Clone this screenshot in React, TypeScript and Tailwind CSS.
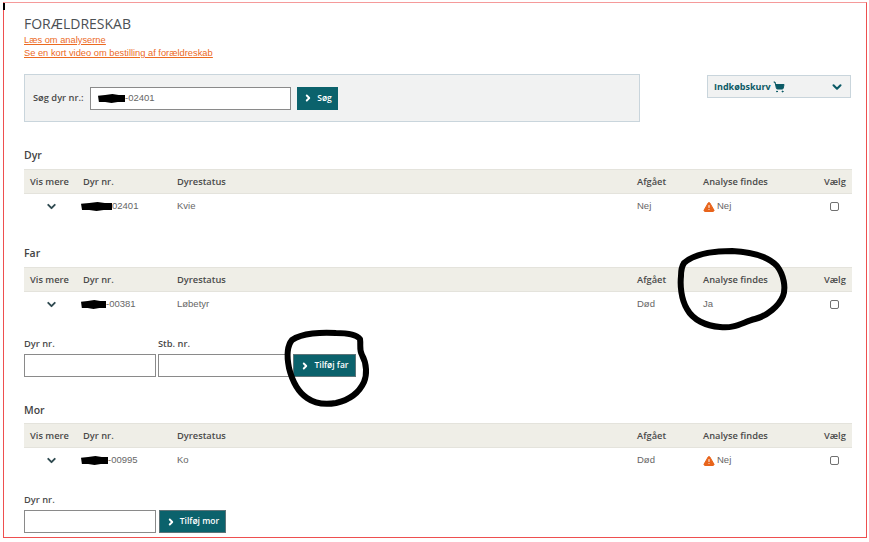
import { ShoppingCart, ChevronDown, ChevronRight, TriangleAlert } from 'lucide-react';

const sans = "font-['Open_Sans',sans-serif]";
const arial = "font-['Liberation_Sans',Arial,sans-serif]";

// black marker over the animal number
function Blob({ w, h = 9 }: { w: number; h?: number }) {
  return (
    <svg width={w} height={h} viewBox="0 0 30 10" preserveAspectRatio="none" className="shrink-0" aria-hidden="true">
      <path d="M0 2 8 1 16 0 23 1 30 1 30 9 22 9 15 10 8 9 1 9z" fill="#000" />
    </svg>
  );
}

function AddButton({ label, width }: { label: string; width: string }) {
  return (
    <button className={`flex items-center justify-center gap-1 h-[23px] ${width} bg-[#0b626c] border border-[#5d7478] text-white text-[8.5px] font-semibold ${sans}`}>
      <ChevronRight size={10} strokeWidth={4.5} />
      {label}
    </button>
  );
}

function AnimalTable({ dyrNr, status, afgaaet, analyse, blob }: { dyrNr: string; status: string; afgaaet: string; analyse: string; blob: number }) {
  return (
    <div className="w-[828px]">
      <div className={`flex items-center h-[25px] bg-[#efeee7] border-t border-b border-[#e4e3dc] text-[9.3px] font-semibold text-[#4a4a4a] ${sans}`}>
        <div className="w-[59px] pl-[6px]">Vis mere</div>
        <div className="w-[94px]">Dyr nr.</div>
        <div className="w-[460px]">Dyrestatus</div>
        <div className="w-[66px]">Afgået</div>
        <div className="w-[121px]">Analyse findes</div>
        <div>Vælg</div>
      </div>
      <div className={`flex items-center h-[25px] text-[9.5px] text-[#666] ${arial}`}>
        <div className="w-[54px] mr-[5px] flex justify-center text-[#2f4a50]">
          <ChevronDown size={13} strokeWidth={3.5} />
        </div>
        <div className="w-[94px] flex items-center -translate-x-[2px]">
          <Blob w={blob} />
          {dyrNr}
        </div>
        <div className="w-[460px]">{status}</div>
        <div className="w-[66px]">{afgaaet}</div>
        <div className="w-[121px] flex items-center gap-[2px]">
          {analyse === 'Nej' && <TriangleAlert size={12} strokeWidth={2} className="fill-[#e8641b] text-[#e8641b] [&>path:nth-child(2)]:text-white [&>path:nth-child(3)]:text-white" />}
          {analyse}
        </div>
        <div className="pl-[6px] flex">
          <span className="block w-[9px] h-[9px] bg-white border border-[#707070] rounded-[2px]" />
        </div>
      </div>
    </div>
  );
}

function Field({ label, width }: { label: string; width: string }) {
  return (
    <div className={`flex flex-col ${width}`}>
      <label className={`text-[9.3px] font-semibold text-[#4a4a4a] mb-[4px] leading-[13px] ${sans}`}>{label}</label>
      <input className="h-[23px] w-full bg-white border border-[#8a8a8a] outline-none" />
    </div>
  );
}

function Title({ children }: { children: string }) {
  return <h2 className={`text-[10.5px] font-semibold text-[#444] leading-[14px] ${sans}`}>{children}</h2>;
}

export default function App() {
  return (
    <div className="relative w-[869px] h-[542px] bg-white overflow-hidden">
      <div className="absolute left-[3px] top-[3px] w-[2px] h-[7px] bg-black" />
      <div className="ml-[3px] mt-[2px] w-[864px] h-[536px] border border-[#ee4f4f] border-t-[#f59a9a] pl-[20px] pt-[12px]">
        <div className="flex justify-between w-[828px]">
          <div>
            <h1 className={`text-[14px] leading-[18px] text-[#4b5054] ${sans}`}>FORÆLDRESKAB</h1>
            <div className={`text-[9.3px] leading-[13px] text-[#ec6a1f] underline ${arial} mt-[1px]`}>
              <a className="block" href="#">Læs om analyserne</a>
              <a className="block" href="#">Se en kort video om bestilling af forældreskab</a>
            </div>
            <div className="flex items-center w-[616px] h-[48px] mt-[14px] bg-[#f1f2f2] border border-[#c9d5dc] pl-[8px] gap-[6px]">
              <span className={`text-[9.3px] font-semibold text-[#4a4a4a] ${sans} w-[51px] whitespace-nowrap`}>Søg dyr nr.:</span>
              <div className={`flex items-center w-[201px] h-[23px] bg-white border border-[#8a8a8a] pl-[7px] text-[9.5px] text-[#666] ${arial}`}>
                <Blob w={27} />-02401
              </div>
              <button className={`flex items-center justify-center gap-1 w-[41px] h-[23px] bg-[#0b626c] text-white text-[8.5px] font-semibold ${sans}`}>
                <ChevronRight size={10} strokeWidth={4.5} />
                Søg
              </button>
            </div>
          </div>
          <div className="flex items-center justify-between w-[144px] h-[23px] mt-[60px] mr-[1px] bg-[#f1f2f2] border border-[#c9d5dc] pl-[6px] pr-[6px] text-[#0b5a66]">
            <span className={`flex items-center gap-[2px] text-[9px] font-bold ${sans}`}>
              Indkøbskurv
              <ShoppingCart size={12} className="fill-[#0b5a66]" />
            </span>
            <ChevronDown size={14} strokeWidth={3.5} />
          </div>
        </div>

        <section className="mt-[26px]">
          <Title>Dyr</Title>
          <div className="mt-[7px]">
            <AnimalTable dyrNr="02401" status="Kvie" afgaaet="Nej" analyse="Nej" blob={31} />
          </div>
        </section>

        <section className="mt-[27px]">
          <Title>Far</Title>
          <div className="mt-[7px]">
            <AnimalTable dyrNr="-00381" status="Løbetyr" afgaaet="Død" analyse="Ja" blob={25} />
          </div>
          <div className="flex items-end mt-[20px]">
            <Field label="Dyr nr." width="w-[132px] mr-[2px]" />
            <Field label="Stb. nr." width="w-[132px] mr-[3px]" />
            <AddButton label="Tilføj far" width="w-[63px]" />
          </div>
        </section>

        <section className="mt-[26px]">
          <Title>Mor</Title>
          <div className="mt-[6px]">
            <AnimalTable dyrNr="-00995" status="Ko" afgaaet="Død" analyse="Nej" blob={27} />
          </div>
          <div className="flex items-end mt-[20px]">
            <Field label="Dyr nr." width="w-[132px] mr-[3px]" />
            <AddButton label="Tilføj mor" width="w-[67px]" />
          </div>
        </section>
      </div>

      {/* hand drawn marker rings over the page */}
      <svg className="absolute left-0 top-0 pointer-events-none" width="869" height="542" fill="none" stroke="#000" strokeWidth="6" strokeLinejoin="round" strokeLinecap="round">
        <path d="M684 263c10-9 29-12 48-12 18 1 35 4 45 15 7 9 9 22 6 30-4 10-16 20-28 23-12 3-20 10-35 8-14-1-27-7-33-18-6-10-7-24-6-33 0-6 1-10 3-13z" />
        <path d="M292 340c10-7 30-8 44-7 10 0 20 1 24 6 1 7-1 11 2 16 5 9 5 20 2 27-5 11-15 18-28 21-12 2-22 0-29-5-9-6-15-18-18-30-2-10-2-22 3-28z" />
      </svg>
    </div>
  );
}
